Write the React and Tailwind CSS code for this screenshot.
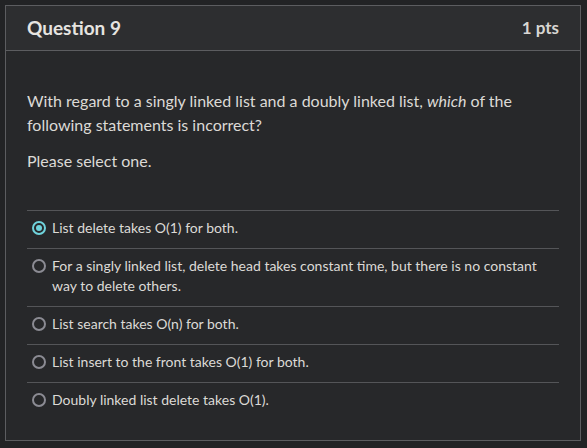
import React from "react";

const answers = [
  { id: 1, text: "List delete takes O(1) for both.", checked: true },
  {
    id: 2,
    text: "For a singly linked list, delete head takes constant time, but there is no constant way to delete others.",
  },
  { id: 3, text: "List search takes O(n) for both." },
  { id: 4, text: "List insert to the front takes O(1) for both." },
  { id: 5, text: "Doubly linked list delete takes O(1)." },
];

const Radio = ({ checked }) =>
  checked ? (
    <span className="mt-[3px] w-[14px] h-[14px] shrink-0 rounded-full border-2 border-[#6fd3dc] flex items-center justify-center">
      <span className="w-[6px] h-[6px] rounded-full bg-[#6fd3dc]" />
    </span>
  ) : (
    <span className="mt-[3px] w-[14px] h-[14px] shrink-0 rounded-full border-2 border-[#8b8b93]" />
  );

export default function App() {
  return (
    <div
      className="w-[587px] h-[448px] bg-[#222325] p-[5px] pr-[6px]"
      style={{ fontFamily: "Lato, 'Open Sans', sans-serif" }}
    >
      <div className="h-[436px] border border-[#5c5d60] bg-[#27282a] flex flex-col">
        <div className="h-[45px] bg-[#2d2e30] border-b border-[#5c5d60] flex items-center justify-between px-[21px]">
          <h2 className="text-[19px] font-bold text-[#e6e4e0]">Question 9</h2>
          <span className="text-[17px] font-bold text-[#d8d6d2]">1 pts</span>
        </div>
        <div className="px-[21px] pt-[38px] text-[#dcdad6]">
          <p className="text-[16px] leading-[24px]">
            With regard to a singly linked list and a doubly linked list, <em>which</em> of the
            following statements is incorrect?
          </p>
          <p className="text-[16px] leading-[24px] mt-[12px]">Please select one.</p>
          <div className="mt-[37px]">
            {answers.map((a) => (
              <div
                key={a.id}
                className="border-t border-[#545558] flex items-start gap-[6px] pl-[5px] pr-[12px] pt-[7px] pb-[10px]"
              >
                <Radio checked={a.checked} />
                <span className="text-[14px] leading-[20px] text-[#dcdad6]">{a.text}</span>
              </div>
            ))}
          </div>
        </div>
      </div>
    </div>
  );
}
